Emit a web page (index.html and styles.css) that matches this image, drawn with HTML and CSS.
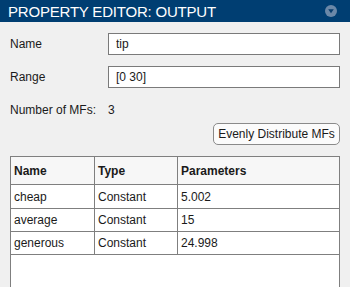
FILE: index.html
```html
<!DOCTYPE html>
<html lang="en">
<head>
    <meta charset="UTF-8">
    <title>Property Editor: Output</title>
    <link rel="stylesheet" href="styles.css">
</head>
<body>
    <div class="panel-header">
        <span class="panel-title">PROPERTY EDITOR: OUTPUT</span>
        <svg class="panel-toggle" width="12" height="12" viewBox="0 0 12 12">
            <circle cx="6" cy="6" r="6" fill="#6b88a8"/>
            <path d="M3.2 4.2 H8.8 L6 8.2 Z" fill="#0a3e6e"/>
        </svg>
    </div>

    <div class="panel-body">
        <div class="field-row">
            <label class="field-label">Name</label>
            <input class="field-input" type="text" value="tip">
        </div>
        <div class="field-row">
            <label class="field-label">Range</label>
            <input class="field-input" type="text" value="[0 30]">
        </div>
        <div class="field-row info-row">
            <span class="field-label">Number of MFs:</span>
            <span class="field-value">3</span>
        </div>

        <div class="button-row">
            <button class="action-button">Evenly Distribute MFs</button>
        </div>

        <div class="table-wrapper">
            <table class="mf-table">
                <thead>
                    <tr>
                        <th class="col-name">Name</th>
                        <th class="col-type">Type</th>
                        <th>Parameters</th>
                    </tr>
                </thead>
                <tbody>
                    <tr><td>cheap</td><td>Constant</td><td>5.002</td></tr>
                    <tr><td>average</td><td>Constant</td><td>15</td></tr>
                    <tr><td>generous</td><td>Constant</td><td>24.998</td></tr>
                </tbody>
            </table>
        </div>
    </div>
</body>
</html>
```

FILE: styles.css
```css
body {
    margin: 0;
    padding: 0;
    background-color: #f0f0f0;
    font-family: 'Liberation Sans', Arial, sans-serif;
    font-size: 12px;
    color: #1a1a1a;
    overflow: hidden;
}

.panel-header {
    height: 22px;
    background-color: #003e72;
    display: flex;
    align-items: center;
    justify-content: space-between;
    padding: 0 13px 0 8px;
}

.panel-title {
    color: white;
    font-size: 15px;
    letter-spacing: -0.2px;
}

.panel-toggle {
    display: block;
}

.panel-body {
    padding: 11px 10px 0 10px;
}

.field-row {
    display: flex;
    align-items: center;
    height: 22px;
    margin-bottom: 11px;
}

.field-label {
    width: 98px;
}

.field-input {
    flex: 1;
    height: 22px;
    box-sizing: border-box;
    margin: 0;
    padding: 0 7px;
    border: 1px solid #7a7a7a;
    background: white;
    font-family: inherit;
    font-size: 12px;
    color: #1a1a1a;
    outline: none;
}

.info-row {
    margin-bottom: 2px;
}

.button-row {
    display: flex;
    justify-content: flex-end;
}

.action-button {
    width: 127px;
    height: 22px;
    padding: 0;
    border: 1px solid #8a8a8a;
    border-radius: 5px;
    background: #fbfbfb;
    font-family: inherit;
    font-size: 12px;
    color: #1a1a1a;
}

.table-wrapper {
    margin-top: 11px;
    height: 140px;
    border: 1px solid #7f7f7f;
    background: white;
}

.mf-table {
    width: 100%;
    border-collapse: collapse;
}

.mf-table th, .mf-table td {
    text-align: left;
    padding: 0 3px;
    border: 1px solid #7f7f7f;
    height: 22px;
}

.mf-table tbody tr:first-child td {
    height: 23px;
}

.mf-table tr > :first-child {
    border-left: none;
}

.mf-table tr > :last-child {
    border-right: none;
}

.mf-table thead th {
    border-top: none;
    height: 27px;
    background: #f7f7f7;
    font-weight: bold;
}

.col-name {
    width: 77px;
}

.col-type {
    width: 76px;
}
```
